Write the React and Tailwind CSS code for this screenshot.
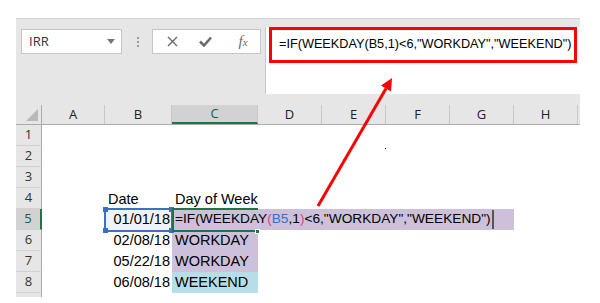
import React from "react";

const cols = [
  { key: "A", w: "w-[63px]" },
  { key: "B", w: "w-[67px]" },
  { key: "C", w: "w-[86px]", active: true },
  { key: "D", w: "w-[64px]" },
  { key: "E", w: "w-[64px]" },
  { key: "F", w: "w-[64px]" },
  { key: "G", w: "w-[64px]" },
  { key: "H", w: "w-[64px]" },
];

const cell = "font-['Liberation_Sans',Arial,sans-serif] text-[14.5px] text-black leading-none";

function RowHead({ n, active }) {
  return (
    <div
      className={`w-[26px] h-full shrink-0 flex items-center justify-center border-b border-[#d0d0d0] text-[13px] ${
        active
          ? "bg-[#d2d2d2] border-r-2 border-r-[#217346] text-[#1e5c3a]"
          : "border-r border-r-[#ababab] text-[#333]"
      }`}
    >
      {n}
    </div>
  );
}

function Row({ n, active, children }) {
  return (
    <div className="flex h-[21px]">
      <RowHead n={n} active={active} />
      <div className="flex flex-1 bg-white">{children}</div>
    </div>
  );
}

function DateCell({ children, selected }) {
  return (
    <>
      <div className="w-[63px] shrink-0" />
      <div
        className={`w-[67px] shrink-0 flex items-center justify-end pr-[2px] ${cell} ${
          selected ? "bg-[#eef3fb]" : ""
        }`}
      >
        {children}
      </div>
    </>
  );
}

export default function App() {
  return (
    <div className="relative w-[600px] h-[303px] bg-white overflow-hidden font-['Open_Sans',sans-serif]">
      <div className="h-[18px]" />
      <div className="ml-4 w-[564px] h-[279px] bg-[#e6e6e6] border-t border-[#d4d4d4]">
        {/* formula toolbar */}
        <div className="flex h-[86px] items-start">
          <div className="mt-[10px] ml-[5px] w-[101px] h-[25px] bg-white border border-[#c6c6c6] flex items-center justify-between pl-[7px] pr-[6px]">
            <span className="text-[13px] text-[#333] font-['Open_Sans',sans-serif]">IRR</span>
            <svg width="8" height="5" viewBox="0 0 8 5">
              <path d="M0 0h8L4 5z" fill="#777" />
            </svg>
          </div>
          <div className="mt-[18px] ml-[15px] flex flex-col gap-[2px]">
            <div className="w-[2px] h-[2px] bg-[#9a9a9a]" />
            <div className="w-[2px] h-[2px] bg-[#9a9a9a]" />
            <div className="w-[2px] h-[2px] bg-[#9a9a9a]" />
          </div>
          <div className="mt-[10px] ml-[13px] w-[109px] h-[25px] bg-white border border-[#c6c6c6] flex items-center">
            <div className="w-[37px] flex justify-center pl-[2px]">
              <svg width="11" height="11" viewBox="0 0 11 11">
                <path d="M1 1l9 9M10 1l-9 9" stroke="#6b6b6b" strokeWidth="1.4" />
              </svg>
            </div>
            <div className="w-[30px] flex justify-center">
              <svg width="13" height="11" viewBox="0 0 13 11">
                <path d="M1 5.5l4 4L12 1.5" stroke="#6b6b6b" strokeWidth="2.6" fill="none" />
              </svg>
            </div>
            <div className="flex-1 flex justify-center pl-[6px]">
              <span className="font-['Liberation_Serif',serif] italic text-[15px] text-[#6b6b6b] leading-none">
                f<span className="text-[11px]">x</span>
              </span>
            </div>
          </div>
          <div className="mt-[8px] ml-[4px] flex-1 h-[67px] bg-white border-l border-[#c6c6c6] pl-[3px] pr-[3px]">
            <div className="h-[36px] border-[3px] border-[#ff0000] flex items-center pl-[7px]">
              <span className="text-[12.7px] text-black font-['Liberation_Sans',Arial,sans-serif] whitespace-nowrap">
                =IF(WEEKDAY(B5,1)&lt;6,"WORKDAY","WEEKEND")
              </span>
            </div>
          </div>
        </div>

        {/* grid */}
        <div className="h-[192px] overflow-hidden">
          <div className="flex h-[20px] border-b border-[#ababab]">
            <div className="w-[26px] shrink-0 border-r border-[#ababab] relative">
              <svg className="absolute right-[3px] bottom-[3px]" width="12" height="12" viewBox="0 0 12 12">
                <path d="M12 0V12H0z" fill="#b8b8b8" />
              </svg>
            </div>
            {cols.map((c) => (
              <div
                key={c.key}
                className={`${c.w} shrink-0 flex items-center justify-center text-[13px] border-r border-[#c8c8c8] ${
                  c.active ? "bg-[#d2d2d2] border-b-2 border-b-[#217346] text-[#1e5c3a]" : "text-[#222]"
                }`}
              >
                {c.key}
              </div>
            ))}
          </div>

          <Row n={1} />
          <Row n={2} />
          <Row n={3} />
          <Row n={4}>
            <div className="w-[63px] shrink-0" />
            <div className={`w-[67px] shrink-0 flex items-center pl-[3px] pt-[1px] ${cell}`}>Date</div>
            <div className={`w-[86px] shrink-0 flex items-center pl-[3px] pt-[1px] whitespace-nowrap ${cell}`}>
              Day of Week
            </div>
          </Row>
          <Row n={5} active>
            <DateCell selected>01/01/18</DateCell>
            <div className="w-[342px] shrink-0 flex items-center pl-[3px] bg-[#ccc0da] whitespace-nowrap text-[13.7px] font-['Liberation_Sans',Arial,sans-serif] text-black">
              =IF(WEEKDAY<span className="text-[#e0457b]">(</span>
              <span className="text-[#3a6fc4]">B5</span>,1<span className="text-[#e0457b]">)</span>
              &lt;6,"WORKDAY","WEEKEND")
              <span className="ml-[1px] w-[2px] h-[19px] bg-[#555]" />
            </div>
          </Row>
          <Row n={6}>
            <DateCell>02/08/18</DateCell>
            <div className={`w-[86px] shrink-0 flex items-center pl-[3px] bg-[#ccc0da] ${cell}`}>WORKDAY</div>
          </Row>
          <Row n={7}>
            <DateCell>05/22/18</DateCell>
            <div className={`w-[86px] shrink-0 flex items-center pl-[3px] bg-[#ccc0da] ${cell}`}>WORKDAY</div>
          </Row>
          <Row n={8}>
            <DateCell>06/08/18</DateCell>
            <div className={`w-[86px] shrink-0 flex items-center pl-[3px] bg-[#b7dee8] ${cell}`}>WEEKEND</div>
          </Row>
          <Row n="" />
        </div>
      </div>

      {/* reference highlight around B5 */}
      <div className="absolute left-[104px] top-[208px] w-[69px] h-[24px] border-2 border-[#3d6fc6] pointer-events-none">
        <div className="absolute -left-[3px] -top-[3px] w-[5px] h-[5px] bg-[#3d6fc6]" />
        <div className="absolute -right-[3px] -top-[3px] w-[5px] h-[5px] bg-[#3d6fc6]" />
        <div className="absolute -left-[3px] -bottom-[3px] w-[5px] h-[5px] bg-[#3d6fc6]" />
        <div className="absolute -right-[3px] -bottom-[3px] w-[5px] h-[5px] bg-[#3d6fc6]" />
      </div>
      {/* active cell C5 */}
      <div className="absolute left-[172px] top-[208px] w-[86px] h-[24px] border-t-2 border-b-2 border-l-2 border-[#217346] pointer-events-none">
        <div className="absolute -right-[2px] -bottom-[4px] w-[5px] h-[5px] bg-[#217346] border border-white" />
      </div>

      <div className="absolute left-[385px] top-[148px] w-[1px] h-[1px] bg-black" />

      <svg className="absolute left-0 top-0 pointer-events-none" width="600" height="303" viewBox="0 0 600 303">
        <line x1="318" y1="206" x2="386" y2="88.5" stroke="#ff0000" strokeWidth="3" />
        <polygon points="392,78 391,91.5 381,85.5" fill="#ff0000" />
      </svg>
    </div>
  );
}
